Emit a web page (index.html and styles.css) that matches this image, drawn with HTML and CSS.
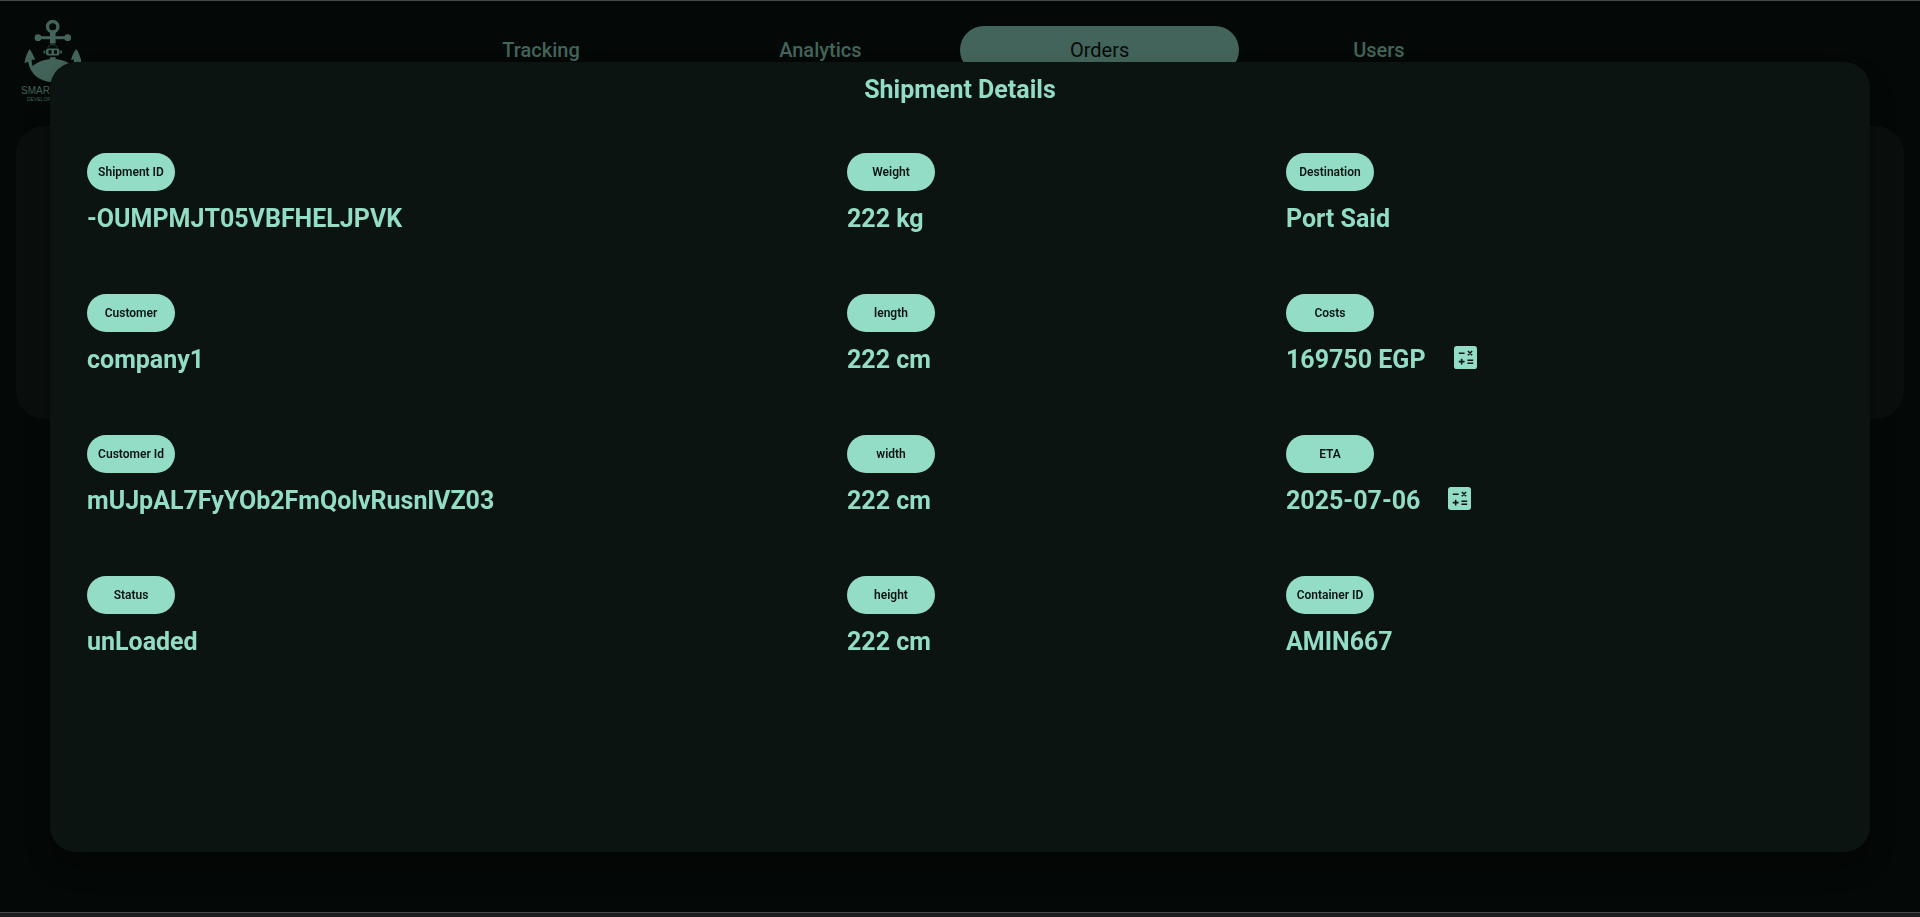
FILE: index.html
```html
<!DOCTYPE html>
<html lang="en">
<head>
<meta charset="utf-8">
<meta name="viewport" content="width=device-width, initial-scale=1">
<title>Shipment Details</title>
<link rel="stylesheet" href="styles.css">
</head>
<body>
<div class="page">
  <header class="header">
    <a class="brand" href="#" aria-label="Smart Port">
      <svg class="logo" viewBox="5 5 66 67" aria-hidden="true">
        <circle cx="36.7" cy="12.7" r="5.2" fill="none" stroke="currentColor" stroke-width="3.4"/>
        <path d="M34 18h5.6v11.5H34z"/>
        <path d="M21 22.2h31v3H21z"/>
        <circle cx="22" cy="23.7" r="3.4"/><circle cx="51.7" cy="23.7" r="3.4"/>
        <path d="M32 33.500c1-4 8-4 9.500 0" fill="none" stroke="currentColor" stroke-width="1" opacity=".6"/>
        <path fill-rule="evenodd" d="M32 34.500h9.500a2 2 0 0 1 2 2v3a2 2 0 0 1-2 2H32a2 2 0 0 1-2-2v-3a2 2 0 0 1 2-2zM32.500 36.300v3.500h3v-3.500zM38 36.300v3.500h3v-3.500z"/>
        <path d="M27.600 36.500h1.600v3h-1.600zM44.300 36.500h1.600v3h-1.600z"/>
        <path d="M34 43.200h5.600v4H34z"/>
        <path d="M13.500 35C11 39 9 44 8.500 49.200L12 47.500C14 60 24 68 36.500 68S59 60 61.500 47.500L65.500 49.200C65 44 63 39 60.500 35 57.500 38 56 42 55 46L58 45.500C58 48 57.500 50 57 52 46 42.500 28 42.500 16.500 52 16 50 15.700 48 15.700 45.500L19 46C18 42 16 38 13.500 35z"/>
      </svg>
      <span class="brand-name">SMART PORT</span>
      <span class="brand-sub">DEVELOPMENT</span>
    </a>
    <nav class="tabs">
      <a class="tab" href="#">Tracking</a>
      <a class="tab" href="#">Analytics</a>
      <a class="tab tab-active" href="#" aria-current="page">Orders</a>
      <a class="tab" href="#">Users</a>
    </nav>
  </header>
  <main class="panel"></main>
  <footer class="footer"></footer>
</div>
<div class="overlay">
  <section class="dialog" role="dialog" aria-labelledby="dialog-title">
    <h1 class="dialog-title" id="dialog-title">Shipment Details</h1>
    <dl class="details">
      <div class="field"><dt class="label">Shipment ID</dt><dd class="value">-OUMPMJT05VBFHELJPVK</dd></div>
      <div class="field"><dt class="label">Weight</dt><dd class="value">222 kg</dd></div>
      <div class="field"><dt class="label">Destination</dt><dd class="value">Port Said</dd></div>
      <div class="field"><dt class="label">Customer</dt><dd class="value">company1</dd></div>
      <div class="field"><dt class="label">length</dt><dd class="value">222 cm</dd></div>
      <div class="field"><dt class="label">Costs</dt><dd class="value">169750 EGP
        <button class="calc" type="button" aria-label="Calculate costs"><svg viewBox="0 0 24 24"><rect width="24" height="24" rx="3"/><path class="calc-marks" d="M5 7.500h6M14.500 5.300l4.400 4.400M18.900 5.300l-4.400 4.400M5 16.300h6M8 13.300v6M14 14.800h6M14 18h6"/></svg></button></dd></div>
      <div class="field"><dt class="label">Customer Id</dt><dd class="value">mUJpAL7FyYOb2FmQolvRusnlVZ03</dd></div>
      <div class="field"><dt class="label">width</dt><dd class="value">222 cm</dd></div>
      <div class="field"><dt class="label">ETA</dt><dd class="value">2025-07-06
        <button class="calc" type="button" aria-label="Calculate ETA"><svg viewBox="0 0 24 24"><rect width="24" height="24" rx="3"/><path class="calc-marks" d="M5 7.500h6M14.500 5.300l4.400 4.400M18.900 5.300l-4.400 4.400M5 16.300h6M8 13.300v6M14 14.800h6M14 18h6"/></svg></button></dd></div>
      <div class="field"><dt class="label">Status</dt><dd class="value">unLoaded</dd></div>
      <div class="field"><dt class="label">height</dt><dd class="value">222 cm</dd></div>
      <div class="field"><dt class="label">Container ID</dt><dd class="value">AMIN667</dd></div>
    </dl>
  </section>
</div>
</body>
</html>
```
FILE: styles.css
```css
* {
  box-sizing: border-box;
}

body {
  margin: 0;
  background: #040807;
  color: #93dcc5;
  font-family: Roboto, "Liberation Sans", sans-serif;
}

.page {
  display: flex;
  flex-direction: column;
  min-height: 100vh;
  border-top: 1px solid #484b4a;
}

.header {
  display: grid;
  grid-template-columns: 1fr 3fr 1fr;
  column-gap: 8px;
  align-items: start;
  padding: 18px 21px 0;
  height: 125px;
  color: #43645a;
}

.brand {
  display: flex;
  flex-direction: column;
  justify-self: start;
  color: inherit;
  text-decoration: none;
}

.logo {
  width: 66px;
  height: 67px;
  fill: currentColor;
}

.brand-name,
.brand-sub {
  font-family: "Liberation Sans", sans-serif;
}

.brand-name {
  font-size: 10px;
  line-height: 10px;
}

.brand-sub {
  padding-left: 6px;
  font-size: 5px;
  line-height: 6px;
}

.tabs {
  display: grid;
  grid-template-columns: repeat(4, 1fr);
  padding-top: 7px;
}

.tab {
  border-radius: 24px;
  color: #43645a;
  font-size: 20px;
  font-weight: 500;
  line-height: 48px;
  text-align: center;
  text-decoration: none;
}

.tab-active {
  background: #43645a;
  color: #050a09;
  font-weight: 400;
}

.panel {
  height: 293px;
  margin: 0 16px;
  border-radius: 28px;
  background: #0a0f0e;
}

.footer {
  height: 5px;
  margin-top: auto;
  border-top: 1px solid #484b4a;
  background: #1e1e20;
}

.overlay {
  position: fixed;
  inset: 0;
  padding: 62px 50px 65px;
}

.dialog {
  height: 100%;
  padding: 11px 37px 0;
  border-radius: 26px;
  background: #0c1412;
  box-shadow: 0 16px 24px rgba(0, 0, 0, 0.3);
}

.dialog-title {
  margin: 0;
  font-size: 25px;
  font-weight: 700;
  line-height: 34px;
  text-align: center;
}

.details {
  display: grid;
  grid-template-columns: 760fr 439fr 547fr;
  row-gap: 57px;
  margin: 46px 0 0;
}

.label {
  display: flex;
  align-items: center;
  justify-content: center;
  width: 88px;
  height: 38px;
  padding-bottom: 1px;
  border-radius: 19px;
  background: #93dcc5;
  color: #0c1412;
  font-size: 12px;
  font-weight: 600;
}

.value {
  display: flex;
  align-items: center;
  gap: 28px;
  height: 38px;
  margin: 8px 0 0;
  font-size: 25px;
  font-weight: 700;
}

.calc {
  display: flex;
  padding: 0 0 4px;
  border: 0;
  background: none;
  color: #93dcc5;
}

.calc svg {
  width: 23px;
  height: 23px;
  fill: currentColor;
}

.calc .calc-marks {
  fill: none;
  stroke: #0c1412;
  stroke-width: 1.6;
}
```
